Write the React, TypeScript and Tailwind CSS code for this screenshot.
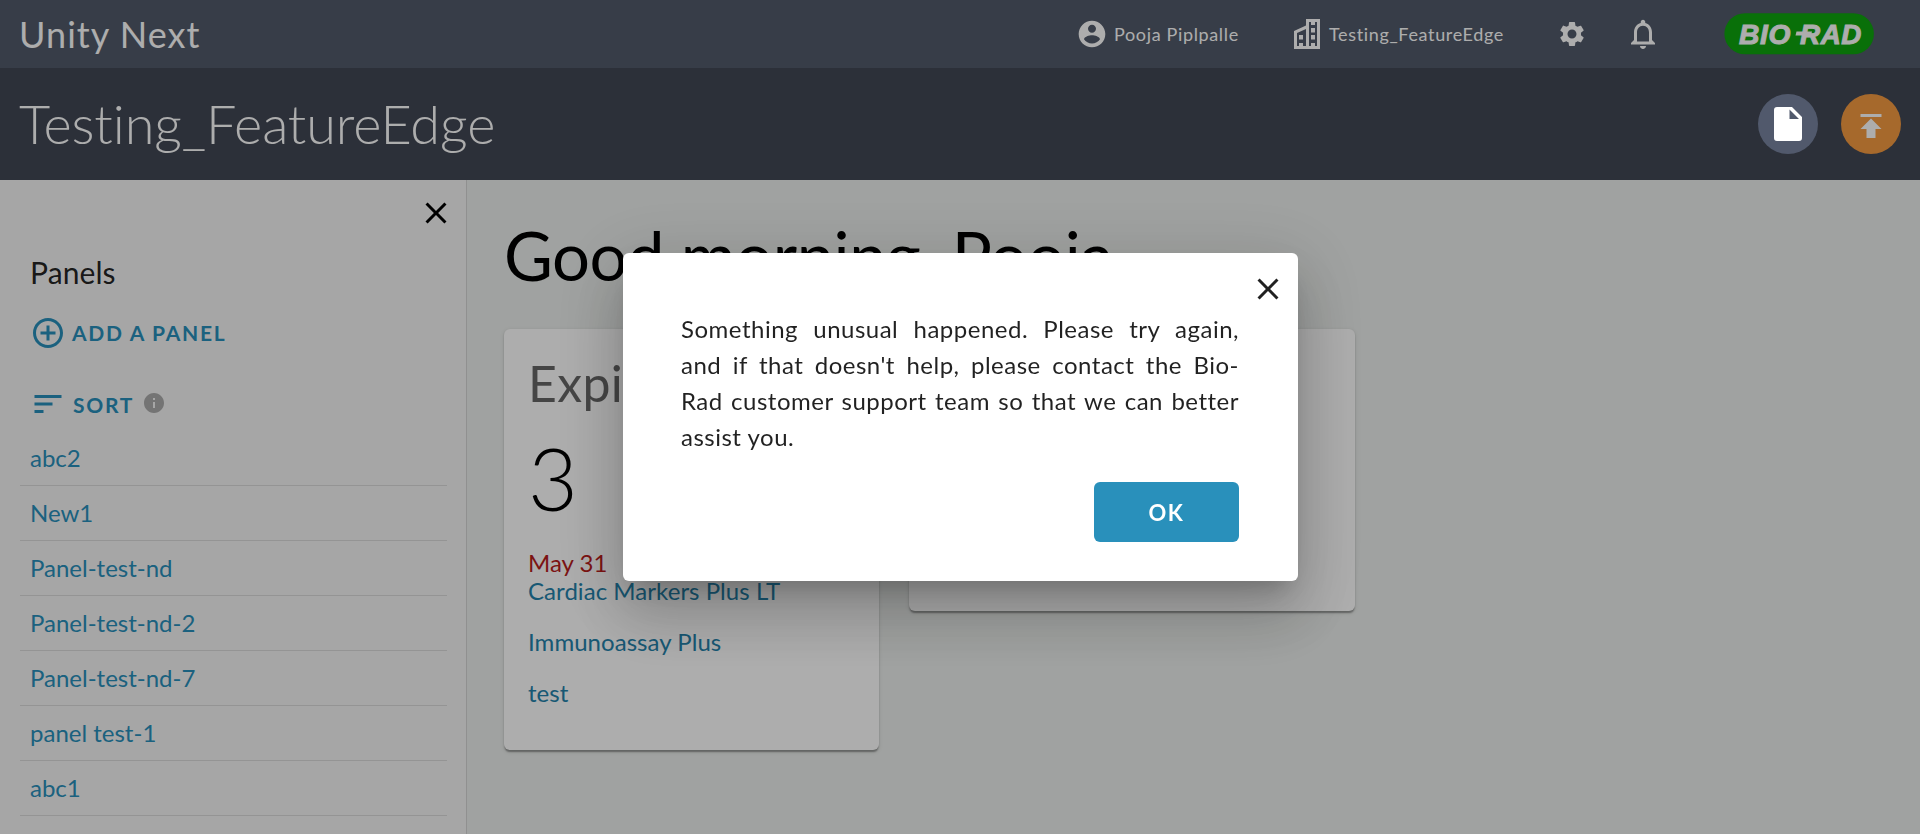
import type { ReactNode } from 'react';

const PANELS = ['abc2', 'New1', 'Panel-test-nd', 'Panel-test-nd-2', 'Panel-test-nd-7', 'panel test-1', 'abc1'];

function Icon({ d, className }: { d: string; className: string }) {
  return (
    <svg viewBox="0 0 24 24" className={`shrink-0 fill-current ${className}`}>
      <path d={d} />
    </svg>
  );
}

const CLOSE = 'M19 6.41L17.59 5 12 10.59 6.41 5 5 6.41 10.59 12 5 17.59 6.41 19 12 13.41 17.59 19 19 17.59 13.41 12z';
const ACCOUNT = 'M12 2C6.48 2 2 6.48 2 12s4.48 10 10 10 10-4.48 10-10S17.52 2 12 2zm0 3c1.66 0 3 1.34 3 3s-1.34 3-3 3-3-1.34-3-3 1.34-3 3-3zm0 14.2c-2.5 0-4.71-1.28-6-3.22.03-1.99 4-3.08 6-3.08 1.99 0 5.97 1.09 6 3.08-1.29 1.94-3.5 3.22-6 3.22z';
const GEAR = 'M19.14 12.94c.04-.3.06-.61.06-.94 0-.32-.02-.64-.07-.94l2.03-1.58c.18-.14.23-.41.12-.61l-1.92-3.32c-.12-.22-.37-.29-.59-.22l-2.39.96c-.5-.38-1.03-.7-1.62-.94l-.36-2.54c-.04-.24-.24-.41-.48-.41h-3.84c-.24 0-.43.17-.47.41l-.36 2.54c-.59.24-1.13.57-1.62.94l-2.39-.96c-.22-.08-.47 0-.59.22L2.74 8.87c-.12.21-.08.47.12.61l2.03 1.58c-.05.3-.09.63-.09.94s.02.64.07.94l-2.03 1.58c-.18.14-.23.41-.12.61l1.92 3.32c.12.22.37.29.59.22l2.39-.96c.5.38 1.03.7 1.62.94l.36 2.54c.05.24.24.41.48.41h3.84c.24 0 .44-.17.47-.41l.36-2.54c.59-.24 1.13-.56 1.62-.94l2.39.96c.22.08.47 0 .59-.22l1.92-3.32c.12-.22.07-.47-.12-.61l-2.01-1.58zM12 15.6c-1.98 0-3.6-1.62-3.6-3.6s1.62-3.6 3.6-3.6 3.6 1.62 3.6 3.6-1.62 3.6-3.6 3.6z';
const BELL = 'M12 22c1.1 0 2-.9 2-2h-4c0 1.1.9 2 2 2zm6-6v-5c0-3.07-1.63-5.64-4.5-6.32V4c0-.83-.67-1.5-1.5-1.5s-1.5.67-1.5 1.5v.68C7.64 5.36 6 7.92 6 11v5l-2 2v1h16v-1l-2-2zm-2 1H8v-6c0-2.48 1.51-4.5 4-4.5s4 2.02 4 4.5v6z';
const PUBLISH = 'M5 4v2h14V4H5zm0 10h4v6h6v-6h4l-7-7-7 7z';
const ADD = 'M13 7h-2v4H7v2h4v4h2v-4h4v-2h-4V7zm-1-5C6.48 2 2 6.48 2 12s4.48 10 10 10 10-4.48 10-10S17.52 2 12 2zm0 18c-4.41 0-8-3.59-8-8s3.59-8 8-8 8 3.59 8 8-3.59 8-8 8z';
const SORT = 'M3 18h6v-2H3v2zM3 6v2h18V6H3zm0 7h12v-2H3v2z';
const INFO = 'M12 2C6.48 2 2 6.48 2 12s4.48 10 10 10 10-4.48 10-10S17.52 2 12 2zm1 15h-2v-6h2v6zm0-8h-2V7h2v2z';

function Building() {
  return (
    <svg viewBox="0 0 26 30" className="h-[30px] w-[26px] shrink-0 fill-white" fillRule="evenodd">
      <path d="M0 30V12L12 6.500V0h14v30zM3 27h2v-3h4v3h3V10L3 14zM15 27h2v-3h4v3h2V3h-2v3h-4V3h-2z" />
      <path d="M5 16h4v4.500H5zM17 9h4v4.500h-4zM17 16h4v4.500h-4z" />
    </svg>
  );
}

function Logo() {
  return (
    <svg viewBox="0 0 150 42" className="h-[42px] w-[150px] shrink-0">
      <rect width="149.500" height="41" x="0.400" y="0.300" rx="20.500" fill="#0ea50e" />
      <g fill="#fff" stroke="#fff" strokeWidth="1" fontFamily="Liberation Sans, sans-serif" fontWeight="700" fontStyle="italic" fontSize="28">
        <text x="15" y="30.600" textLength="52" lengthAdjust="spacingAndGlyphs">BIO</text>
        <text x="76" y="30.600" textLength="62" lengthAdjust="spacingAndGlyphs">RAD</text>
      </g>
      <path d="M72.500 18.500H88l-1 4H71.500z" fill="#fff" />
    </svg>
  );
}

function Card({ children, className }: { children?: ReactNode; className: string }) {
  return <section className={`rounded-[6px] bg-white shadow-[0_3px_1.5px_-1.5px_rgba(0,0,0,.2),0_1.5px_1.5px_rgba(0,0,0,.14),0_1.5px_4.5px_rgba(0,0,0,.12)] ${className}`}>{children}</section>;
}

export default function App() {
  return (
    <div className="flex h-[834px] w-full flex-col overflow-hidden font-['Lato',sans-serif] text-black">
      <header className="flex h-[68px] shrink-0 items-center bg-[#515a6a] pr-[46px] pl-[19px] text-white">
        <h1 className="text-[36px] leading-[68px] tracking-[1.05px]">Unity Next</h1>
        <div className="ml-auto flex items-center text-[18px] tracking-[0.65px]">
          <Icon d={ACCOUNT} className="size-8" />
          <span className="ml-[6px] w-[180px] pt-px">Pooja Piplpalle</span>
          <Building />
          <span className="ml-[9px] w-[228px] pt-px">Testing_FeatureEdge</span>
          <Icon d={GEAR} className="size-[30px]" />
          <Icon d={BELL} className="ml-[38px] size-9" />
          <div className="ml-[63px]"><Logo /></div>
        </div>
      </header>

      <div className="flex h-28 shrink-0 items-center bg-[#414755] pr-[19px] pl-[19px] text-white">
        <h2 className="text-[54px] leading-none font-light tracking-[-0.1px]">Testing_FeatureEdge</h2>
        <button className="relative z-20 ml-auto flex size-[60px] items-center justify-center rounded-full bg-[#51596c]">
          <svg viewBox="0 0 28 34" className="h-[34px] w-7 fill-white" fillRule="evenodd">
            <path d="M3 0h15l10 10v21a3 3 0 0 1-3 3H3a3 3 0 0 1-3-3V3a3 3 0 0 1 3-3zM15.500 2.500v9.500h9.500z" />
          </svg>
        </button>
        <button className="ml-[23px] flex size-[60px] items-center justify-center rounded-full bg-[#f59b42] pt-1">
          <Icon d={PUBLISH} className="size-9" />
        </button>
      </div>

      <div className="flex min-h-0 flex-1">
        <aside className="flex w-[467px] shrink-0 flex-col border-r border-[#d5d5d5] bg-[#f5f5f5] pr-[19px] pl-5">
          <div className="flex h-[66px] items-center justify-end">
            <Icon d={CLOSE} className="-mr-[7px] size-9" />
          </div>
          <div className="px-[10px]">
            <h3 className="mt-[6px] text-[30px] leading-[40px] tracking-[0.1px] text-black/87">Panels</h3>
            <div className="mt-[23px] flex h-9 items-center text-[#2990bb]">
              <Icon d={ADD} className="size-9" />
              <span className="ml-[6px] text-[21px] font-bold tracking-[1.7px]">ADD A PANEL</span>
            </div>
            <div className="mt-[35px] flex h-9 items-center text-[#2990bb]">
              <Icon d={SORT} className="size-9" />
              <span className="ml-[7px] pt-[2px] text-[21px] font-bold tracking-[1.7px]">SORT</span>
              <Icon d={INFO} className="mb-[2px] ml-[7.5px] size-6 text-[#ababab]" />
            </div>
          </div>
          <ul className="mt-[9px] text-[24px] text-[#2990bb]">
            {PANELS.map((name) => (
              <li key={name} className="flex h-[55px] items-center border-b border-[#dadada] px-[10px]">{name}</li>
            ))}
          </ul>
        </aside>

        <main className="flex-1 bg-[#ecefed] pl-[37px]">
          <h2 className="mt-[34px] text-[67px] leading-[82px] tracking-[-0.5px]">Good morning, Pooja</h2>
          <div className="mt-[33px] flex items-start gap-[30px]">
            <Card className="h-[421px] w-[375px] px-6 pt-6">
              <h3 className="text-[50px] leading-[60px] tracking-[0.3px] text-black/60">Expi</h3>
              <p className="mt-[12px] text-[86px] leading-[106px] font-light">3</p>
              <p className="mt-[18px] text-[24px] leading-7 text-[#b71c1c]">May 31</p>
              <ul className="flex flex-col gap-[23px] text-[24px] leading-7 tracking-[0.05px] text-[#2482ab]">
                <li>Cardiac Markers Plus LT</li>
                <li>Immunoassay Plus</li>
                <li>test</li>
              </ul>
            </Card>
            <Card className="h-[282px] w-[446px]" />
          </div>
        </main>
      </div>

      <div className="fixed inset-0 z-10 flex items-center justify-center bg-black/32">
        <div role="dialog" className="relative h-[328px] w-[675px] rounded-[6px] bg-white px-[58.5px] pt-[58px] shadow-[0_16.5px_22.5px_-10.5px_rgba(0,0,0,.2),0_36px_57px_4.5px_rgba(0,0,0,.14),0_13.5px_69px_12px_rgba(0,0,0,.12)]">
          <Icon d={CLOSE} className="absolute top-[18px] right-3 size-9 text-black/87" />
          <p className="text-justify text-[24px] leading-9 tracking-[0.5px] text-black/87">
            Something unusual happened. Please try again, and if that doesn't help, please contact the Bio-Rad customer support team so that we can better assist you.
          </p>
          <div className="mt-[27px] flex justify-end">
            <button className="h-[60px] w-[145px] rounded-[6px] bg-[#2990bb] text-[22px] font-bold tracking-[1.6px] text-white">OK</button>
          </div>
        </div>
      </div>
    </div>
  );
}
